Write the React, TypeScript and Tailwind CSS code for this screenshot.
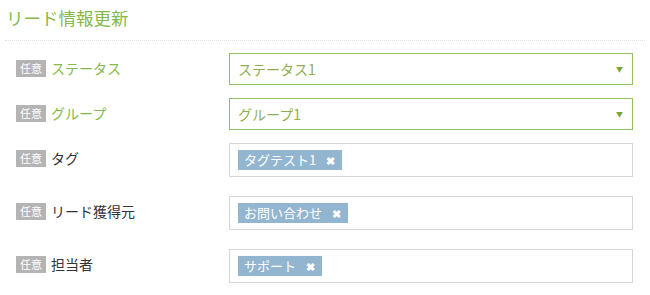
import React from "react"

const FONT = { fontFamily: '"Noto Sans CJK JP", "Noto Sans", sans-serif' }

type SelectRow = { label: string; value: string }
type TagRow = { label: string; tag: string }

const selects: SelectRow[] = [
  { label: "ステータス", value: "ステータス1" },
  { label: "グループ", value: "グループ1" },
]

const tags: TagRow[] = [
  { label: "タグ", tag: "タグテスト1" },
  { label: "リード獲得元", tag: "お問い合わせ" },
  { label: "担当者", tag: "サポート" },
]

function Label({ text, green }: { text: string; green?: boolean }) {
  return (
    <div className="w-[213px] shrink-0 flex items-center gap-[5px] pt-[6px]">
      <span className="w-[30px] h-[17px] bg-[#b4b4b4] text-white text-[11px] leading-[17px] text-center">任意</span>
      <span className={`text-[14px] leading-[18px] ${green ? "text-[#86b94a]" : "text-[#333333]"}`}>{text}</span>
    </div>
  )
}

export default function App() {
  return (
    <div className="w-[650px] h-[295px] bg-white overflow-hidden" style={FONT}>
      <div className="mx-[5px] pt-[7px] pb-[11px] border-b border-dotted border-[#e2e2e2]">
        <h1 className="pl-[1px] text-[17.5px] leading-[22px] text-[#86b94a] font-normal">リード情報更新</h1>
      </div>

      <div className="pl-[16px] pr-[17px] pt-[12px] flex flex-col">
        {selects.map((row, i) => (
          <div key={row.label} className={`flex items-start ${i > 0 ? "mt-[13px]" : ""}`}>
            <Label text={row.label} green />
            <div className="flex-1 h-[32px] border border-[#8fc35a] flex items-center justify-between pl-[8px] pr-[9px]">
              <span className="text-[14px] text-[#8fae4f]">{row.value}</span>
              <span className="text-[#7aa53a] text-[7px] leading-none">▼</span>
            </div>
          </div>
        ))}

        {tags.map((row, i) => (
          <div key={row.label} className={`flex items-start ${i === 0 ? "mt-[13px]" : "mt-[19px]"}`}>
            <Label text={row.label} />
            <div className="flex-1 h-[34px] border border-[#d6d6d6] flex items-start pl-[8px] pt-[6px]">
              <span className="h-[20px] bg-[#92b6cf] text-white text-[13px] leading-[20px] pl-[6px] pr-[7px] flex items-center gap-[10px]">
                {row.tag}
                <span className="text-[11px] font-bold">✖</span>
              </span>
            </div>
          </div>
        ))}
      </div>
    </div>
  )
}
